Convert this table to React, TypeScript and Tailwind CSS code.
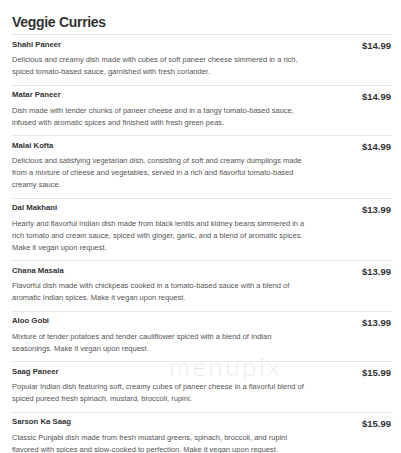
import React from "react";

type Item = { name: string; price: string; lines: string[] };

const items: Item[] = [
  {
    name: "Shahi Paneer",
    price: "$14.99",
    lines: [
      "Delicious and creamy dish made with cubes of soft paneer cheese simmered in a rich,",
      "spiced tomato-based sauce, garnished with fresh coriander.",
    ],
  },
  {
    name: "Matar Paneer",
    price: "$14.99",
    lines: [
      "Dish made with tender chunks of paneer cheese and in a tangy tomato-based sauce,",
      "infused with aromatic spices and finished with fresh green peas.",
    ],
  },
  {
    name: "Malai Kofta",
    price: "$14.99",
    lines: [
      "Delicious and satisfying vegetarian dish, consisting of soft and creamy dumplings made",
      "from a mixture of cheese and vegetables, served in a rich and flavorful tomato-based",
      "creamy sauce.",
    ],
  },
  {
    name: "Dal Makhani",
    price: "$13.99",
    lines: [
      "Hearty and flavorful Indian dish made from black lentils and kidney beans simmered in a",
      "rich tomato and cream sauce, spiced with ginger, garlic, and a blend of aromatic spices.",
      "Make it vegan upon request.",
    ],
  },
  {
    name: "Chana Masala",
    price: "$13.99",
    lines: [
      "Flavorful dish made with chickpeas cooked in a tomato-based sauce with a blend of",
      "aromatic Indian spices. Make it vegan upon request.",
    ],
  },
  {
    name: "Aloo Gobi",
    price: "$13.99",
    lines: [
      "Mixture of tender potatoes and tender cauliflower spiced with a blend of Indian",
      "seasonings. Make it vegan upon request.",
    ],
  },
  {
    name: "Saag Paneer",
    price: "$15.99",
    lines: [
      "Popular Indian dish featuring soft, creamy cubes of paneer cheese in a flavorful blend of",
      "spiced pureed fresh spinach, mustard, broccoli, rupini.",
    ],
  },
  {
    name: "Sarson Ka Saag",
    price: "$15.99",
    lines: [
      "Classic Punjabi dish made from fresh mustard greens, spinach, broccoli, and rupini",
      "flavored with spices and slow-cooked to perfection. Make it vegan upon request.",
    ],
  },
];

export default function App() {
  return (
    <div
      className="relative w-[401px] h-[453px] overflow-hidden bg-white px-[12px] pt-[14.5px]"
      style={{ fontFamily: '"Liberation Sans", Arial, sans-serif' }}
    >
      <h1 className="text-[14px] leading-[14px] font-bold tracking-[-0.3px] text-[#333] pb-[5.5px]">
        Veggie Curries
      </h1>
      <div className="w-[380px]">
        {items.map((it) => (
          <div key={it.name} className="border-t border-[#e6e6e6] pt-[3.5px] pb-[6.5px]">
            <div className="flex items-start justify-between pr-[1px]">
              <span className="text-[7.75px] leading-[12px] font-bold text-[#333]">{it.name}</span>
              <span className="mt-[1.5px] text-[9.5px] leading-[12px] font-bold text-[#333]">
                {it.price}
              </span>
            </div>
            <div className="mt-[2px] text-[7.5px] leading-[12px] text-[#555]">
              {it.lines.map((l, i) => (
                <div key={i} className="whitespace-nowrap">
                  {l}
                </div>
              ))}
            </div>
          </div>
        ))}
      </div>
      <div
        className="pointer-events-none absolute left-[169px] top-[351px] text-[26px] leading-[30px] font-light tracking-[2.5px] text-[rgba(0,0,0,0.1)]"
        style={{ fontFamily: 'Lato, "Open Sans", sans-serif' }}
      >
        menupix
      </div>
    </div>
  );
}
